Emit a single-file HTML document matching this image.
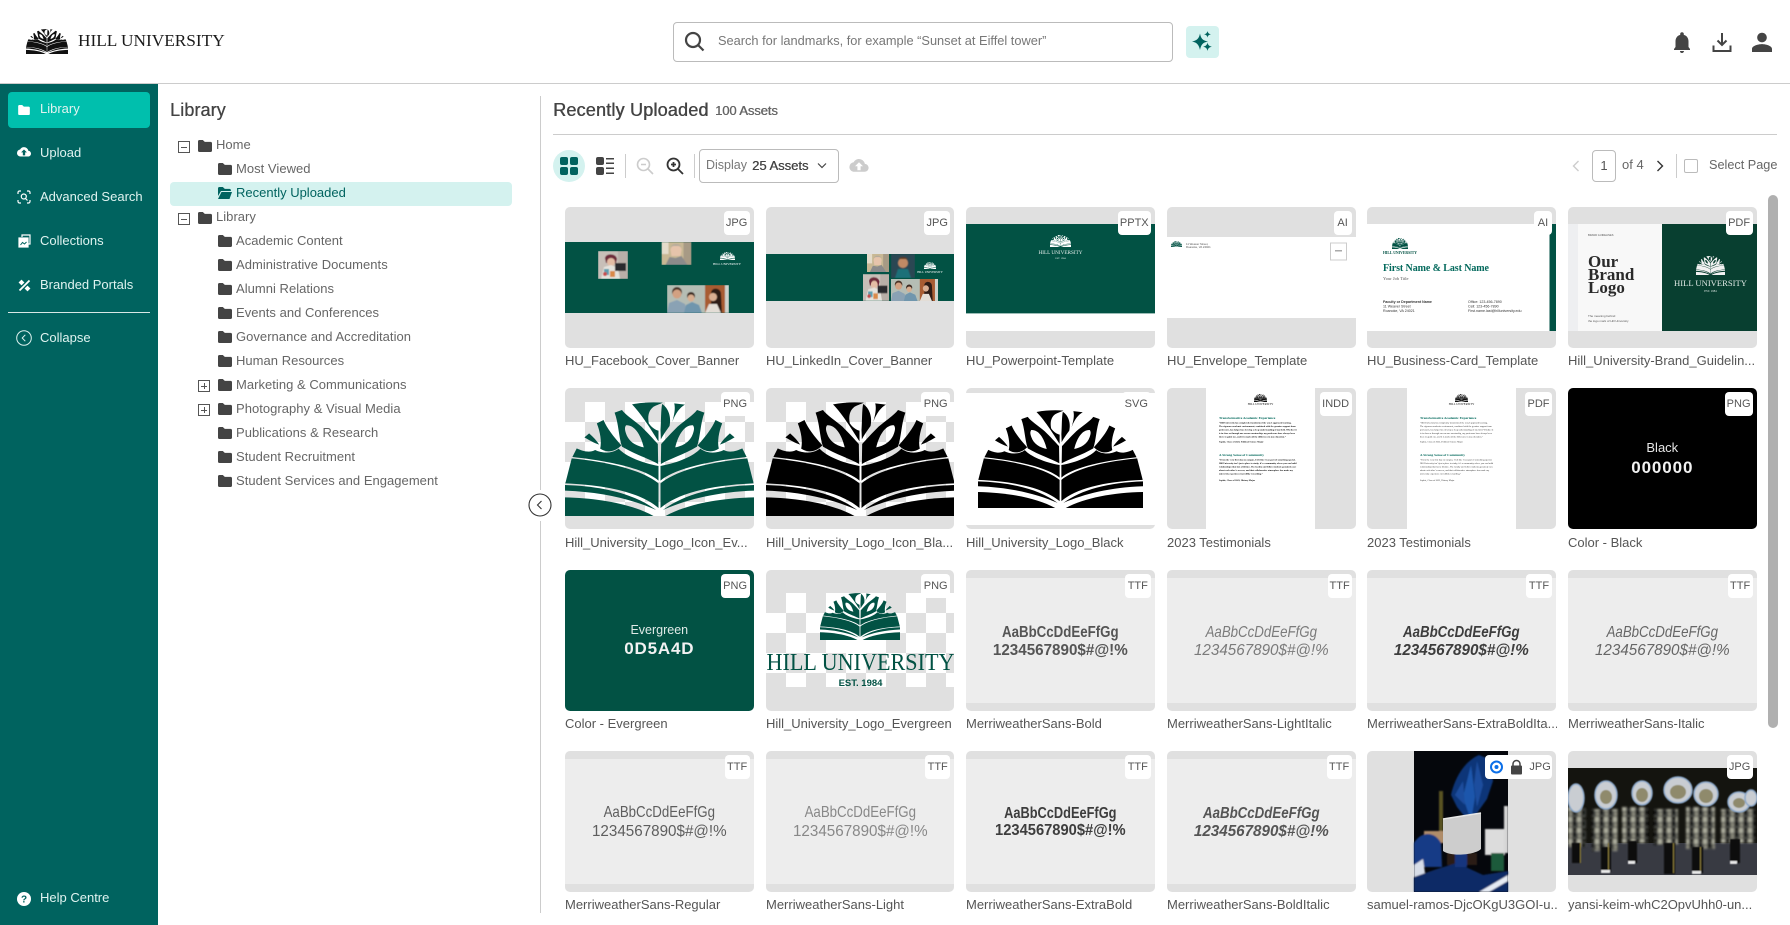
<!DOCTYPE html>
<html lang="en">
<head>
<meta charset="utf-8">
<title>Hill University - Library</title>
<style>
*{box-sizing:border-box}
html,body{margin:0;padding:0}
body{width:1790px;height:925px;overflow:hidden;background:#fff;position:relative;font-family:"Liberation Sans",sans-serif;color:#555}
.a{position:absolute}
.t{position:absolute;white-space:nowrap;line-height:16px;font-size:13px}
.s{color:#dff3f0}
.r{color:#666;letter-spacing:.03px}
.m{text-shadow:.3px 0 0 currentColor}
.c{position:absolute;width:188.6px;height:141px;background:#e0e0e0;border-radius:5px;overflow:hidden}
.c>svg.f{position:absolute;left:0;top:0;width:189px;height:141px}
.b{position:absolute;right:4px;top:4px;height:24px;line-height:24px;background:#fff;border-radius:4px;text-align:center;font-size:11px;font-weight:400;color:#555}
.l{position:absolute;width:190px;white-space:nowrap;overflow:hidden;line-height:16px;font-size:13px;color:#555}
.ttf{position:absolute;left:0;top:8px;width:100%;height:125px;background:#ededed}
.x{position:absolute;left:0;width:100%;text-align:center;white-space:nowrap;color:#5a5a5a}
.x1{font-size:16px;line-height:18px;transform:scaleX(.83)}
.x2{font-size:16px;line-height:18px;transform:scaleX(.95)}
.box{position:absolute;width:12px;height:12px;border:1px solid #555}
.box:before{content:"";position:absolute;left:2px;right:2px;top:4.5px;height:1px;background:#555}
.p:after{content:"";position:absolute;top:2px;bottom:2px;left:4.5px;width:1px;background:#555}
svg{display:block}
</style>
</head>
<body>
<svg width="0" height="0" style="position:absolute">
<defs>
<filter id="bl" x="-5%" y="-5%" width="110%" height="110%"><feGaussianBlur stdDeviation=".7"/></filter>
<filter id="bs" x="-5%" y="-5%" width="110%" height="110%"><feGaussianBlur stdDeviation=".45"/></filter>
<filter id="bm" x="-5%" y="-5%" width="110%" height="110%"><feGaussianBlur stdDeviation="1.100"/></filter>
<symbol id="folder" viewBox="0 0 14 12"><path fill="currentColor" d="M0 1.400C0 .6.6 0 1.400 0h3.400l2 1.900h5.800c.8 0 1.400.6 1.400 1.400v7.300c0 .8-.6 1.400-1.400 1.400H1.400C.6 12 0 11.400 0 10.600z"/></symbol>
<g id="th">
<path d="M148 38L170 30C182 46 205 60 228 80C248 100 264 118 277 132L278 192C250 176 210 164 170 140C160 110 160 70 148 38ZM182 76C205 74 225 100 235 142C212 138 190 125 182 100C178 88 178 82 182 76Z" fill-rule="evenodd"/>
<path d="M95 70L115 60C125 85 145 110 168 136C150 155 125 160 105 146C110 125 105 95 95 70Z"/>
<path d="M58 112L72 100C85 112 95 122 102 134C85 128 72 120 58 112Z"/>
<path d="M35 145C50 152 72 160 90 150C110 160 140 162 160 146C180 168 225 188 279 198L279 242C245 212 160 186 22 171Z"/>
<path d="M20 175C160 189 240 218 279 250L279 324C230 282 140 256 1 250Z"/>
<path d="M0 255C120 259 210 284 272 330C200 298 110 276 0 272Z"/>
<path d="M0 292C100 294 200 312 264 348L0 348Z"/>
</g>
<symbol id="tree" viewBox="0 6 564 342" preserveAspectRatio="none"><g fill="currentColor">
<use href="#th"/><use href="#th" transform="matrix(-1 0 0 1 564 0)"/>
<path d="M200 13C232 7 262 6 292 8C282 13 268 17 262 22C250 32 246 48 250 70C258 82 270 90 279 92L279 124C262 98 232 46 200 13Z"/>
<path d="M326 10L358 14C344 22 330 38 320 66C326 44 330 26 326 10Z"/>
<path d="M290 12C308 24 318 50 312 78C305 88 296 100 286 118L285 90C287 60 286 30 290 12Z"/>
</g></symbol>
<symbol id="ph1" viewBox="0 0 30 28" preserveAspectRatio="none"><g filter="url(#bs)"><rect width="30" height="28" fill="#c8bfb8"/><rect x="20" width="10" height="28" fill="#b9afa8"/><path d="M7 7C8 2 18 2 19 8L18 12H8Z" fill="#6e2b3a"/><circle cx="13" cy="11" r="4" fill="#e4bda5"/><path d="M3 28L6 16 13 14 20 17 22 28Z" fill="#e5e3dd"/><rect x="6" y="18" width="5" height="6" fill="#5e9fb0"/><rect x="12" y="20" width="5" height="6" fill="#d98a4a"/><rect x="17" y="12" width="11" height="8" fill="#2b2b2e"/><circle cx="7" cy="23" r="2" fill="#c74e4e"/></g></symbol>
<symbol id="ph2" viewBox="0 0 30 23" preserveAspectRatio="none"><g filter="url(#bs)"><rect width="30" height="23" fill="#c8b894"/><rect x="22" width="8" height="23" fill="#a79a85"/><rect y="0" width="7" height="12" fill="#e4dccb"/><path d="M9 8C9 2 20 2 20 8L19 14H10Z" fill="#e6c4ab"/><path d="M9 5C11 1 18 1 20 5L18 4H11Z" fill="#b5ab9c"/><path d="M4 23L8 15 14 16 20 14 26 23Z" fill="#8b8b8b"/></g></symbol>
<symbol id="ph3" viewBox="0 0 62 28" preserveAspectRatio="none"><g filter="url(#bs)"><rect width="62" height="28" fill="#b5bdb4"/><rect x="38" width="20" height="28" fill="#a85c32"/><rect x="58" width="4" height="28" fill="#cfd2cc"/><circle cx="10" cy="7" r="5" fill="#4a3326"/><circle cx="10" cy="9" r="4.500" fill="#d2a182"/><path d="M0 28L2 18 10 15 18 19 20 28Z" fill="#8aa2b4"/><circle cx="24" cy="11" r="4" fill="#3c2a20"/><circle cx="24" cy="13" r="3.500" fill="#d8ae90"/><path d="M17 28L19 20 25 17 32 20 35 28Z" fill="#6f96ad"/><path d="M44 8C44 2 54 2 54 9L55 28H40L44 18Z" fill="#2e1e18"/><circle cx="46" cy="12" r="4" fill="#d9ae92"/><path d="M38 28L42 19 50 19 54 28Z" fill="#e3ddd6"/></g></symbol>
<symbol id="ph4" viewBox="0 0 24 24" preserveAspectRatio="none"><g filter="url(#bs)"><rect width="24" height="24" fill="#2c4752"/><circle cx="12" cy="9" r="5" fill="#c08a65"/><path d="M7 6C8 2 16 2 17 6L16 5H8Z" fill="#5c3a22"/><path d="M4 24L7 15 17 15 20 24Z" fill="#1d6f78"/></g></symbol>
<pattern id="ck" width="40" height="40" patternUnits="userSpaceOnUse" patternTransform="translate(0 14)"><rect width="40" height="40" fill="#e0e0e0"/><rect x="20" width="20" height="20" fill="#fff"/><rect y="20" width="20" height="20" fill="#fff"/></pattern>
<pattern id="ck2" width="40" height="40" patternUnits="userSpaceOnUse" patternTransform="translate(0 23)"><rect width="40" height="40" fill="#e0e0e0"/><rect x="20" width="20" height="20" fill="#fff"/><rect y="20" width="20" height="20" fill="#fff"/></pattern>
<pattern id="mot" width="9" height="11" patternUnits="userSpaceOnUse"><rect width="9" height="11" fill="#4a4b46"/><rect x="0" y="0" width="4" height="5" fill="#aeae9e"/><rect x="5" y="4" width="3" height="5" fill="#101010"/><rect x="1" y="6" width="3" height="4" fill="#8d8c7e"/><rect x="5" y="0" width="4" height="3" fill="#1c1c18"/></pattern>
</defs>
</svg>

<!-- header -->
<svg class="a" style="left:26px;top:29px;color:#111" width="42" height="25"><use href="#tree" width="42" height="25"/></svg>
<div class="t" style="left:78px;top:31px;line-height:20px;font-family:'Liberation Serif',serif;font-size:17.300px;color:#1a1a1a">HILL UNIVERSITY</div>

<div class="a" style="left:673px;top:22px;width:500px;height:40px;border:1px solid #bbb;border-radius:4px"></div>
<svg class="a" style="left:683px;top:30px" width="22" height="22" viewBox="0 0 22 22" fill="none" stroke="#444" stroke-width="2.200"><circle cx="10" cy="10" r="7"/><path d="M15 15l5.500 5.500"/></svg>
<div class="t" style="left:718px;top:33px;font-size:12.800px;color:#777">Search for landmarks, for example “Sunset at Eiffel tower”</div>

<div class="a" style="left:1186px;top:26px;width:33px;height:32px;background:#d4f2ef;border-radius:4px"></div>
<svg class="a" style="left:1190px;top:30px" width="26" height="24" viewBox="0 0 26 24" fill="#00635f"><path d="M10 3.500C11 8.500 12.500 10.500 18 11.500C12.500 12.500 11 15 10 20C9 15 7 12.500 2 11.500C7 10.500 9 8.500 10 3.500Z"/><path d="M17.500 1C18 3 18.700 3.800 21 4.300C18.700 4.800 18 5.600 17.500 7.600C17 5.600 16.300 4.800 14 4.300C16.300 3.800 17 3 17.500 1Z"/><path d="M17.500 12.500C18 15 19 16 21.800 16.700C19 17.300 18 18.300 17.500 21C17 18.300 16 17.300 13.200 16.700C16 16 17 15 17.500 12.500Z"/></svg>

<svg class="a" style="left:1670px;top:30px" width="24" height="24" viewBox="0 0 24 24" fill="#444"><path d="M12 23c1.100 0 2-.9 2-2h-4a2 2 0 0 0 2 2zm6.500-6v-5.500c0-3.300-1.700-5.900-4.700-6.600V4a1.800 1.800 0 0 0-3.600 0v.9c-3 .7-4.700 3.300-4.700 6.600V17L4 19v1h16v-1z"/></svg>
<svg class="a" style="left:1711px;top:31px" width="22" height="22" viewBox="0 0 22 22" fill="none" stroke="#444" stroke-width="2"><path d="M11 2v11.500M6.500 9.500L11 14l4.500-4.500M2.500 14.500V20h17v-5.500"/></svg>
<svg class="a" style="left:1750px;top:30px" width="24" height="24" viewBox="0 0 24 24" fill="#444"><path d="M12 12.300c2.700 0 4.800-2.100 4.800-4.800S14.700 2.700 12 2.700 7.200 4.800 7.200 7.500s2.100 4.800 4.800 4.800zm0 1.800c-3.300 0-10 1.500-10 4.800V22h20v-3.100c0-3.300-6.700-4.800-10-4.800z"/></svg>

<div class="a" style="left:0;top:83px;width:1790px;height:1px;background:#ccc"></div>

<!-- sidebar -->
<div class="a" style="left:0;top:84px;width:158px;height:841px;background:#00635f"></div>
<div class="a" style="left:8px;top:92px;width:142px;height:36px;background:#00bfad;border-radius:4px"></div>
<svg class="a" style="left:18px;top:105px;color:#fff" width="12" height="10"><use href="#folder" width="12" height="10"/></svg>
<div class="t s" style="left:40px;top:101px">Library</div>
<svg class="a" style="left:17px;top:147px" width="14" height="12" viewBox="0 0 24 20" fill="#fff"><path d="M19.350 6.040A7.490 7.490 0 0 0 12 0C9.110 0 6.600 1.640 5.350 4.040A5.990 5.990 0 0 0 0 10c0 3.310 2.690 6 6 6h13c2.760 0 5-2.240 5-5 0-2.640-2.050-4.780-4.650-4.960zM14 9v5h-4V9H7l5-5 5 5z"/></svg>
<div class="t s" style="left:40px;top:145px">Upload</div>
<svg class="a" style="left:17px;top:190px" width="14" height="14" viewBox="0 0 14 14" fill="none" stroke="#fff" stroke-width="1.200"><path d="M1 4V2.500A1.500 1.500 0 0 1 2.500 1H4M10 1h1.500A1.500 1.500 0 0 1 13 2.500V4M13 10v1.500a1.500 1.500 0 0 1-1.500 1.500H10M4 13H2.500A1.500 1.500 0 0 1 1 11.500V10"/><circle cx="6.800" cy="6.500" r="2.500"/><path d="M8.500 8.500l2 2"/></svg>
<div class="t s" style="left:40px;top:189px">Advanced Search</div>
<svg class="a" style="left:18px;top:234px" width="13" height="14" viewBox="0 0 13 14" fill="none" stroke="#fff" stroke-width="1.200"><path d="M4 3V1h8v9h-2"/><rect x="1" y="4" width="9" height="9" fill="#fff"/><path d="M2.500 11l2-2.500 2 1.500 2-2" stroke="#00635f" stroke-width="1"/></svg>
<div class="t s" style="left:40px;top:233px">Collections</div>
<svg class="a" style="left:18px;top:279px" width="13" height="13" viewBox="0 0 13 13" fill="none" stroke="#fff" stroke-width="1.800"><path d="M1.500 11.500L11.500 1.500"/><path d="M1 3.500L3.500 1 6 3.500 3.500 6zM7 9.500l2.500-2.500L12 9.500 9.500 12z" fill="#fff" stroke-width=".6"/></svg>
<div class="t s" style="left:40px;top:277px">Branded Portals</div>
<div class="a" style="left:8px;top:312px;width:142px;height:1px;background:#d9e8e6"></div>
<svg class="a" style="left:16px;top:330px" width="16" height="16" viewBox="0 0 16 16" fill="none" stroke="#dff3f0" stroke-width="1"><circle cx="8" cy="8" r="7.300"/><path d="M9.300 4.800L6.200 8l3.100 3.200"/></svg>
<div class="t s" style="left:40px;top:330px">Collapse</div>
<svg class="a" style="left:17px;top:892px" width="14" height="14" viewBox="0 0 14 14"><circle cx="7" cy="7" r="7" fill="#fff"/><text x="7" y="10.500" font-family="Liberation Sans" font-weight="700" font-size="10" text-anchor="middle" fill="#00635f">?</text></svg>
<div class="t s" style="left:40px;top:890px">Help Centre</div>

<!-- tree -->
<div class="t m" style="left:170px;top:100px;font-size:18px;line-height:20px;color:#444;letter-spacing:.1px">Library</div>
<div class="a" style="left:170px;top:182px;width:342px;height:24px;background:#d4f2ef;border-radius:4px"></div>

<div class="box" style="left:178px;top:141px"></div>
<svg class="a" style="left:198px;top:140px;color:#444" width="14" height="12"><use href="#folder" width="14" height="12"/></svg>
<div class="t r" style="left:216px;top:137px">Home</div>
<svg class="a" style="left:218px;top:163px;color:#444" width="14" height="12"><use href="#folder" width="14" height="12"/></svg>
<div class="t r" style="left:236px;top:161px">Most Viewed</div>
<svg class="a" style="left:218px;top:187px" width="14" height="12" viewBox="0 0 14 12" fill="#00635f"><path d="M0 1.400C0 .6.6 0 1.400 0h3.400l2 1.900h4.700c.8 0 1.400.6 1.400 1.400v.7H3L0 9z"/><path d="M3.500 5H14l-2.500 7H0z"/></svg>
<div class="t" style="left:236px;top:185px;color:#00635f">Recently Uploaded</div>
<div class="box" style="left:178px;top:213px"></div>
<svg class="a" style="left:198px;top:212px;color:#444" width="14" height="12"><use href="#folder" width="14" height="12"/></svg>
<div class="t r" style="left:216px;top:209px">Library</div>
<svg class="a" style="left:218px;top:235px;color:#444" width="14" height="12"><use href="#folder" width="14" height="12"/></svg>
<div class="t r" style="left:236px;top:233px">Academic Content</div>
<svg class="a" style="left:218px;top:259px;color:#444" width="14" height="12"><use href="#folder" width="14" height="12"/></svg>
<div class="t r" style="left:236px;top:257px">Administrative Documents</div>
<svg class="a" style="left:218px;top:283px;color:#444" width="14" height="12"><use href="#folder" width="14" height="12"/></svg>
<div class="t r" style="left:236px;top:281px">Alumni Relations</div>
<svg class="a" style="left:218px;top:307px;color:#444" width="14" height="12"><use href="#folder" width="14" height="12"/></svg>
<div class="t r" style="left:236px;top:305px">Events and Conferences</div>
<svg class="a" style="left:218px;top:331px;color:#444" width="14" height="12"><use href="#folder" width="14" height="12"/></svg>
<div class="t r" style="left:236px;top:329px">Governance and Accreditation</div>
<svg class="a" style="left:218px;top:355px;color:#444" width="14" height="12"><use href="#folder" width="14" height="12"/></svg>
<div class="t r" style="left:236px;top:353px">Human Resources</div>
<div class="box p" style="left:198px;top:380px"></div>
<svg class="a" style="left:218px;top:379px;color:#444" width="14" height="12"><use href="#folder" width="14" height="12"/></svg>
<div class="t r" style="left:236px;top:377px">Marketing &amp; Communications</div>
<div class="box p" style="left:198px;top:404px"></div>
<svg class="a" style="left:218px;top:403px;color:#444" width="14" height="12"><use href="#folder" width="14" height="12"/></svg>
<div class="t r" style="left:236px;top:401px">Photography &amp; Visual Media</div>
<svg class="a" style="left:218px;top:427px;color:#444" width="14" height="12"><use href="#folder" width="14" height="12"/></svg>
<div class="t r" style="left:236px;top:425px">Publications &amp; Research</div>
<svg class="a" style="left:218px;top:451px;color:#444" width="14" height="12"><use href="#folder" width="14" height="12"/></svg>
<div class="t r" style="left:236px;top:449px">Student Recruitment</div>
<svg class="a" style="left:218px;top:475px;color:#444" width="14" height="12"><use href="#folder" width="14" height="12"/></svg>
<div class="t r" style="left:236px;top:473px">Student Services and Engagement</div>

<div class="a" style="left:540px;top:96px;width:1px;height:394px;background:#ccc"></div>
<div class="a" style="left:540px;top:521px;width:1px;height:392px;background:#ccc"></div>
<svg class="a" style="left:528px;top:493px" width="24" height="24" viewBox="0 0 24 24" fill="#fff" stroke="#333" stroke-width="1.100"><circle cx="12" cy="12" r="11"/><path d="M13.500 8L9.500 12l4 4" fill="none"/></svg>

<!-- main head -->
<div class="t" style="left:553px;top:100px;font-size:18px;line-height:20px;color:#444;letter-spacing:.2px;text-shadow:.45px 0 0 #444">Recently Uploaded</div>
<div class="t" style="left:715px;top:103px;font-size:13px;color:#666;letter-spacing:-.1px;text-shadow:.4px 0 0 #666">100 Assets</div>
<div class="a" style="left:553px;top:134px;width:1224px;height:1px;background:#ccc"></div>

<!-- toolbar -->
<div class="a" style="left:553px;top:150px;width:32px;height:32px;background:#d4f2ef;border-radius:50%"></div>
<svg class="a" style="left:560px;top:157px" width="18" height="18" fill="#00635f"><rect width="8" height="8" rx="2"/><rect x="10" width="8" height="8" rx="2"/><rect y="10" width="8" height="8" rx="2"/><rect x="10" y="10" width="8" height="8" rx="2"/></svg>
<svg class="a" style="left:596px;top:157px" width="18" height="18" fill="#444"><rect width="8" height="8" rx="2"/><rect y="10" width="8" height="8" rx="2"/><rect x="10" y="1" width="8" height="1.500"/><rect x="10" y="5.500" width="8" height="1.500"/><rect x="10" y="10.500" width="8" height="1.500"/><rect x="10" y="15.500" width="8" height="1.500"/></svg>
<div class="a" style="left:625px;top:154px;width:1px;height:24px;background:#ccc"></div>
<svg class="a" style="left:636px;top:157px" width="18" height="18" viewBox="0 0 18 18" fill="none" stroke="#ccc" stroke-width="1.600"><circle cx="7.500" cy="7.500" r="6"/><path d="M12 12l5 5M5 7.500h5"/></svg>
<svg class="a" style="left:666px;top:157px" width="18" height="18" viewBox="0 0 18 18" fill="none" stroke="#333" stroke-width="1.800"><circle cx="7.500" cy="7.500" r="6"/><path d="M12 12l5 5M5 7.500h5M7.500 5v5"/></svg>
<div class="a" style="left:694px;top:154px;width:1px;height:24px;background:#ccc"></div>
<div class="a" style="left:699px;top:149px;width:140px;height:34px;border:1px solid #bbb;border-radius:4px"></div>
<div class="t" style="left:706px;top:157px;color:#777;font-size:12.500px">Display</div>
<div class="t" style="left:752px;top:158px;color:#444;font-size:13px;text-shadow:.4px 0 0 #444">25 Assets</div>
<svg class="a" style="left:816px;top:162px" width="12" height="8" viewBox="0 0 12 8" fill="none" stroke="#444" stroke-width="1.200"><path d="M2 1.500L6 5.500l4-4"/></svg>
<svg class="a" style="left:849px;top:159px" width="20" height="16" viewBox="0 0 24 20" fill="#ccc"><path d="M19.350 6.040A7.490 7.490 0 0 0 12 0C9.110 0 6.600 1.640 5.350 4.040A5.990 5.990 0 0 0 0 10c0 3.310 2.690 6 6 6h13c2.760 0 5-2.240 5-5 0-2.640-2.050-4.780-4.650-4.960zM14 9v5h-4V9H7l5-5 5 5z"/></svg>

<svg class="a" style="left:1571px;top:160px" width="10" height="12" viewBox="0 0 10 12" fill="none" stroke="#ccc" stroke-width="1.400"><path d="M7.500 1L2.500 6l5 5"/></svg>
<div class="a" style="left:1592px;top:150px;width:24px;height:32px;border:1px solid #bbb;border-radius:4px"></div>
<div class="t" style="left:1592px;top:158px;width:24px;text-align:center;color:#555">1</div>
<div class="t" style="left:1622px;top:157px;color:#666">of 4</div>
<svg class="a" style="left:1655px;top:160px" width="10" height="12" viewBox="0 0 10 12" fill="none" stroke="#333" stroke-width="1.400"><path d="M2.500 1l5 5-5 5"/></svg>
<div class="a" style="left:1676px;top:154px;width:1px;height:24px;background:#ccc"></div>
<div class="a" style="left:1684px;top:159px;width:14px;height:14px;border:1px solid #bbb;border-radius:2px"></div>
<div class="t" style="left:1709px;top:157px;color:#666;font-size:12.700px">Select Page</div>

<div class="a" style="left:1768px;top:195px;width:10px;height:533px;background:#b0b0b0;border-radius:5px"></div>

<!-- ROW 1 -->
<div class="c" style="left:565px;top:207px">
<svg class="f" viewBox="0 0 189 141">
<rect y="35" width="189" height="71" fill="#025244"/>
<use href="#ph1" x="33" y="44" width="30" height="28"/>
<use href="#ph2" x="96.500" y="35" width="30" height="23"/>
<use href="#ph3" x="102" y="78" width="62" height="28"/>
<use href="#tree" x="155" y="45" width="15" height="8" style="color:#fff"/>
<text x="162" y="58" font-family="Liberation Serif" font-size="3.300" fill="#fff" text-anchor="middle">HILL UNIVERSITY</text>
</svg><div class="b" style="width:26px">JPG</div></div>
<div class="l" style="left:565px;top:353px">HU_Facebook_Cover_Banner</div>

<div class="c" style="left:765.600px;top:207px">
<svg class="f" viewBox="0 0 189 141">
<rect y="47" width="189" height="47" fill="#025244"/>
<use href="#ph2" x="101" y="47" width="22" height="18"/>
<use href="#ph4" x="125" y="47" width="24" height="24"/>
<use href="#ph1" x="97" y="67" width="26" height="27"/>
<use href="#ph3" x="125" y="72" width="47" height="22"/>
<use href="#tree" x="158" y="55" width="12" height="7" style="color:#fff"/>
<text x="164" y="66" font-family="Liberation Serif" font-size="3" fill="#fff" text-anchor="middle">HILL UNIVERSITY</text>
</svg><div class="b" style="width:26px">JPG</div></div>
<div class="l" style="left:766px;top:353px">HU_LinkedIn_Cover_Banner</div>

<div class="c" style="left:966.200px;top:207px">
<svg class="f" viewBox="0 0 189 141">
<rect y="17" width="189" height="89" fill="#025244"/><rect y="106" width="189" height="1" fill="#9bbdb6"/><rect y="107" width="189" height="17" fill="#fff"/>
<use href="#tree" x="84" y="28" width="21" height="12" style="color:#fff"/>
<text x="94.500" y="47" font-family="Liberation Serif" font-size="5.200" fill="#e8f0ee" text-anchor="middle">HILL UNIVERSITY</text>
<text x="94.500" y="52" font-family="Liberation Serif" font-size="2.500" fill="#e8f0ee" text-anchor="middle">EST. 1984</text>
</svg><div class="b" style="width:33px">PPTX</div></div>
<div class="l" style="left:966px;top:353px">HU_Powerpoint-Template</div>

<div class="c" style="left:1167px;top:207px">
<svg class="f" viewBox="0 0 189 141">
<rect y="30" width="189" height="81" fill="#fff"/>
<use href="#tree" x="4" y="34" width="11" height="6" style="color:#025244"/>
<text x="19" y="38" font-family="Liberation Sans" font-size="2.800" fill="#555">11 Weaver Street,</text>
<text x="19" y="41" font-family="Liberation Sans" font-size="2.800" fill="#555">Roanoke, VA 24021</text>
<rect x="163.500" y="36" width="16" height="17" fill="#fff" stroke="#ccc"/><rect x="168" y="43" width="7" height="1.500" fill="#aaa"/>
</svg><div class="b" style="width:18px">AI</div></div>
<div class="l" style="left:1167px;top:353px">HU_Envelope_Template</div>

<div class="c" style="left:1367.400px;top:207px">
<svg class="f" viewBox="0 0 189 141">
<rect y="17" width="189" height="107" fill="#fff"/><rect x="182.500" y="17" width="6.500" height="107" fill="#025244"/>
<use href="#tree" x="25" y="31" width="16" height="11" style="color:#025244"/>
<text x="33" y="47" font-family="Liberation Serif" font-weight="700" font-size="3.800" fill="#025244" text-anchor="middle">HILL UNIVERSITY</text>
<text x="16" y="64" font-family="Liberation Serif" font-weight="700" font-size="10" fill="#03695c" textLength="106">First Name &amp; Last Name</text>
<text x="16" y="73" font-family="Liberation Serif" font-size="4.500" fill="#555">Your Job Title</text>
<text x="16" y="96" font-family="Liberation Sans" font-weight="700" font-size="3.600" fill="#333">Faculty or Department Name</text>
<text x="16" y="100.500" font-family="Liberation Sans" font-size="3.600" fill="#333">11 Weaver Street</text>
<text x="16" y="105" font-family="Liberation Sans" font-size="3.600" fill="#333">Roanoke, VA 24021</text>
<text x="101" y="96" font-family="Liberation Sans" font-size="3.600" fill="#333">Office: 123-456-7890</text>
<text x="101" y="100.500" font-family="Liberation Sans" font-size="3.600" fill="#333">Cell: 123-456-7890</text>
<text x="101" y="105" font-family="Liberation Sans" font-size="3.600" fill="#333">First.name.last@hilluniversity.edu</text>
</svg><div class="b" style="width:18px">AI</div></div>
<div class="l" style="left:1367px;top:353px">HU_Business-Card_Template</div>

<div class="c" style="left:1568px;top:207px">
<svg class="f" viewBox="0 0 189 141">
<rect y="17" width="10" height="107" fill="#eeeff1"/><rect x="10" y="17" width="84" height="107" fill="#f8f8f8"/><rect x="94" y="17" width="95" height="107" fill="#083f30"/>
<text x="20" y="29" font-family="Liberation Sans" font-size="2.600" fill="#555">BRAND GUIDELINES</text>
<g font-family="Liberation Serif" font-weight="700" font-size="17" fill="#2a2a2a"><text x="20" y="60">Our</text><text x="20" y="73">Brand</text><text x="20" y="86">Logo</text></g>
<text x="20" y="110" font-family="Liberation Sans" font-size="3" fill="#555">The meaning behind</text><text x="20" y="115" font-family="Liberation Sans" font-size="3" fill="#555">the logo mark of Hill University</text>
<use href="#tree" x="128" y="49" width="29" height="19" style="color:#f2f2f2"/>
<text x="142.500" y="79" font-family="Liberation Serif" font-size="8.600" fill="#dfe8e4" text-anchor="middle">HILL UNIVERSITY</text>
<text x="142.500" y="85" font-family="Liberation Serif" font-size="3" fill="#dfe8e4" text-anchor="middle">EST. 1984</text>
</svg><div class="b" style="width:27px">PDF</div></div>
<div class="l" style="left:1568px;top:353px">Hill_University-Brand_Guidelin...</div>

<!-- ROW 2 -->
<div class="c" style="left:565px;top:388.300px">
<svg class="f" viewBox="0 0 189 141"><rect y="14" width="189" height="114" fill="url(#ck)"/><use href="#tree" x="0" y="14" width="189" height="114" style="color:#025244"/></svg>
<div class="b" style="width:29px">PNG</div></div>
<div class="l" style="left:565px;top:534.500px">Hill_University_Logo_Icon_Ev...</div>

<div class="c" style="left:765.600px;top:388.300px">
<svg class="f" viewBox="0 0 189 141"><rect y="14" width="189" height="114" fill="url(#ck)"/><use href="#tree" x="0" y="14" width="189" height="114" style="color:#000"/></svg>
<div class="b" style="width:29px">PNG</div></div>
<div class="l" style="left:766px;top:534.500px">Hill_University_Logo_Icon_Bla...</div>

<div class="c" style="left:966.200px;top:388.300px">
<svg class="f" viewBox="0 0 189 141"><rect y="5" width="189" height="132" fill="#fff"/><use href="#tree" x="12" y="22" width="165" height="98" style="color:#000"/></svg>
<div class="b" style="width:29px">SVG</div></div>
<div class="l" style="left:966px;top:534.500px">Hill_University_Logo_Black</div>

<div class="c" style="left:1167px;top:388.300px">
<svg class="f" viewBox="0 0 189 141">
<rect x="39" width="109" height="141" fill="#fff"/>
<use href="#tree" x="87" y="6" width="13" height="8" style="color:#111"/>
<text x="93.500" y="17" font-family="Liberation Serif" font-size="3" fill="#111" text-anchor="middle">HILL UNIVERSITY</text>
<g font-family="Liberation Serif">
<text x="52" y="31" font-size="3.500" font-weight="700" fill="#03695c">Transformative Academic Experience</text>
<g font-size="2.300" font-weight="700" fill="#111">
<text x="52" y="35.500">“Hill University has completely transformed the way I approach learning.</text>
<text x="52" y="39">The rigorous academic environment, combined with the genuine support from</text>
<text x="52" y="42.500">professors, has helped me develop a deep understanding of my field. Whether it</text>
<text x="52" y="46">is in class or through one-on-one mentorship, my professors have always been</text>
<text x="52" y="49.500">there to guide me, and it is made all the difference in my education.”</text>
<text x="52" y="54.500">Sophie, Class of 2023, Political Science Major</text></g>
<text x="52" y="68" font-size="3.500" font-weight="700" fill="#03695c">A Strong Sense of Community</text>
<g font-size="2.300" font-weight="700" fill="#111">
<text x="52" y="72.500">“From the very first day on campus, I felt like I was part of something special.</text>
<text x="52" y="76">Hill University isn’t just a place to study; it’s a community where you can build</text>
<text x="52" y="79.500">relationships that last a lifetime. The faculty and fellow students genuinely care</text>
<text x="52" y="83">about each other’s success, and that collaborative atmosphere has made my</text>
<text x="52" y="86.500">university experience incredibly rewarding.”</text>
<text x="52" y="93">Sophie, Class of 2023, History Major</text></g>
</g></svg>
<div class="b" style="width:32px">INDD</div></div>
<div class="l" style="left:1167px;top:534.500px">2023 Testimonials</div>

<div class="c" style="left:1367.400px;top:388.300px">
<svg class="f" viewBox="0 0 189 141">
<rect x="40" width="109" height="141" fill="#fff"/>
<use href="#tree" x="88" y="6" width="13" height="8" style="color:#111"/>
<text x="94.500" y="17" font-family="Liberation Serif" font-size="3" fill="#111" text-anchor="middle">HILL UNIVERSITY</text>
<g font-family="Liberation Serif">
<text x="53" y="31" font-size="3.500" font-weight="700" fill="#03695c">Transformative Academic Experience</text>
<g font-size="2.300" fill="#333">
<text x="53" y="35.500">“Hill University has completely transformed the way I approach learning.</text>
<text x="53" y="39">The rigorous academic environment, combined with the genuine support from</text>
<text x="53" y="42.500">professors, has helped me develop a deep understanding of my field. Whether it</text>
<text x="53" y="46">is in class or through one-on-one mentorship, my professors have always been</text>
<text x="53" y="49.500">there to guide me, and it is made all the difference in my education.”</text>
<text x="53" y="54.500">Sophie, Class of 2023, Political Science Major</text></g>
<text x="53" y="68" font-size="3.500" font-weight="700" fill="#03695c">A Strong Sense of Community</text>
<g font-size="2.300" fill="#333">
<text x="53" y="72.500">“From the very first day on campus, I felt like I was part of something special.</text>
<text x="53" y="76">Hill University isn’t just a place to study; it’s a community where you can build</text>
<text x="53" y="79.500">relationships that last a lifetime. The faculty and fellow students genuinely care</text>
<text x="53" y="83">about each other’s success, and that collaborative atmosphere has made my</text>
<text x="53" y="86.500">university experience incredibly rewarding.”</text>
<text x="53" y="93">Sophie, Class of 2023, History Major</text></g>
</g></svg>
<div class="b" style="width:27px">PDF</div></div>
<div class="l" style="left:1367px;top:534.500px">2023 Testimonials</div>

<div class="c" style="left:1568px;top:388.300px;background:#000">
<div class="x" style="top:52px;font-size:13px;line-height:16px;color:#e6e6e6">Black</div>
<div class="x" style="top:70px;font-size:17px;line-height:20px;font-weight:700;letter-spacing:.9px;color:#f2f2f2">000000</div>
<div class="b" style="width:28px">PNG</div></div>
<div class="l" style="left:1568px;top:534.500px">Color - Black</div>

<!-- ROW 3 -->
<div class="c" style="left:565px;top:569.600px;background:#025244">
<div class="x" style="top:52px;font-size:12.500px;line-height:16px;color:#dfeae7">Evergreen</div>
<div class="x" style="top:69px;font-size:17px;line-height:20px;font-weight:700;letter-spacing:.8px;color:#f2f2f2">0D5A4D</div>
<div class="b" style="width:29px">PNG</div></div>
<div class="l" style="left:565px;top:715.700px">Color - Evergreen</div>

<div class="c" style="left:765.600px;top:569.600px">
<svg class="f" viewBox="0 0 189 141"><rect y="23" width="189" height="94" fill="url(#ck2)"/>
<rect x="60" y="23" width="60" height="60" fill="#fff"/>
<use href="#tree" x="54" y="23" width="80" height="47" style="color:#025244"/>
<text x="94.500" y="100" font-family="Liberation Serif" font-size="24.500" fill="#025244" text-anchor="middle" textLength="188" lengthAdjust="spacingAndGlyphs">HILL UNIVERSITY</text>
<text x="94.500" y="116" font-family="Liberation Sans" font-size="9.500" font-weight="700" fill="#025244" text-anchor="middle">EST. 1984</text></svg>
<div class="b" style="width:29px">PNG</div></div>
<div class="l" style="left:766px;top:715.700px">Hill_University_Logo_Evergreen</div>

<div class="c" style="left:966.200px;top:569.600px"><div class="ttf"></div>
<div class="x x1" style="top:54px;font-weight:700;color:#555">AaBbCcDdEeFfGg</div>
<div class="x x2" style="top:72px;font-weight:700;color:#555">1234567890$#@!%</div>
<div class="b" style="width:26px">TTF</div></div>
<div class="l" style="left:966px;top:715.700px">MerriweatherSans-Bold</div>

<div class="c" style="left:1167px;top:569.600px"><div class="ttf"></div>
<div class="x x1" style="top:54px;font-style:italic;color:#7b7b7b">AaBbCcDdEeFfGg</div>
<div class="x x2" style="top:72px;font-style:italic;color:#7b7b7b">1234567890$#@!%</div>
<div class="b" style="width:24px">TTF</div></div>
<div class="l" style="left:1167px;top:715.700px">MerriweatherSans-LightItalic</div>

<div class="c" style="left:1367.400px;top:569.600px"><div class="ttf"></div>
<div class="x x1" style="top:54px;font-style:italic;font-weight:700;color:#3d3d3d">AaBbCcDdEeFfGg</div>
<div class="x x2" style="top:72px;font-style:italic;font-weight:700;color:#3d3d3d">1234567890$#@!%</div>
<div class="b" style="width:26px">TTF</div></div>
<div class="l" style="left:1367px;top:715.700px">MerriweatherSans-ExtraBoldIta...</div>

<div class="c" style="left:1568px;top:569.600px"><div class="ttf"></div>
<div class="x x1" style="top:54px;font-style:italic;color:#666">AaBbCcDdEeFfGg</div>
<div class="x x2" style="top:72px;font-style:italic;color:#666">1234567890$#@!%</div>
<div class="b" style="width:25px">TTF</div></div>
<div class="l" style="left:1568px;top:715.700px">MerriweatherSans-Italic</div>

<!-- ROW 4 -->
<div class="c" style="left:565px;top:751px"><div class="ttf"></div>
<div class="x x1" style="top:53px;color:#5e5e5e">AaBbCcDdEeFfGg</div>
<div class="x x2" style="top:72px;color:#5e5e5e">1234567890$#@!%</div>
<div class="b" style="width:25px">TTF</div></div>
<div class="l" style="left:565px;top:897px">MerriweatherSans-Regular</div>

<div class="c" style="left:765.600px;top:751px"><div class="ttf"></div>
<div class="x x1" style="top:53px;color:#888">AaBbCcDdEeFfGg</div>
<div class="x x2" style="top:72px;color:#888">1234567890$#@!%</div>
<div class="b" style="width:25px">TTF</div></div>
<div class="l" style="left:766px;top:897px">MerriweatherSans-Light</div>

<div class="c" style="left:966.200px;top:751px"><div class="ttf"></div>
<div class="x x1" style="top:54px;font-weight:700;color:#3d3d3d;transform:scaleX(.8)">AaBbCcDdEeFfGg</div>
<div class="x x2" style="top:71px;font-weight:700;color:#3d3d3d;transform:scaleX(.92)">1234567890$#@!%</div>
<div class="b" style="width:26px">TTF</div></div>
<div class="l" style="left:966px;top:897px">MerriweatherSans-ExtraBold</div>

<div class="c" style="left:1167px;top:751px"><div class="ttf"></div>
<div class="x x1" style="top:54px;font-style:italic;font-weight:700;color:#555">AaBbCcDdEeFfGg</div>
<div class="x x2" style="top:72px;font-style:italic;font-weight:700;color:#555">1234567890$#@!%</div>
<div class="b" style="width:25px">TTF</div></div>
<div class="l" style="left:1167px;top:897px">MerriweatherSans-BoldItalic</div>

<div class="c" style="left:1367.400px;top:751px">
<svg class="f" viewBox="0 0 189 141">
<rect x="47" width="94" height="141" fill="#05070c"/>
<g filter="url(#bl)">
<rect x="72" y="40" width="4" height="40" fill="#5a5224"/>
<path d="M84 44C88 26 98 10 112 4L122 8 126 30 120 48 110 62 104 74 98 66 90 56Z" fill="#0d3478"/>
<path d="M96 46L104 14 108 46 104 70Z" fill="#1a56ac"/>
<path d="M110 10L116 34 110 56 107 34Z" fill="#1a4e9e"/>
<path d="M88 44L96 30 98 54Z" fill="#1a4e9e"/>
<rect x="57" y="80" width="20" height="12" fill="#b08d6a"/>
<rect x="118" y="78" width="20" height="26" fill="#dcdcdc"/>
<rect x="137" y="55" width="4" height="47" fill="#d6d6d6"/>
<rect x="124" y="102" width="13" height="18" fill="#1f5a3a"/>
<path d="M47 92C54 80 68 80 74 92L75 116H47Z" fill="#123a86"/>
<path d="M47 114L56 108 58 122 47 128Z" fill="#d7dde8"/>
<rect x="80" y="102" width="30" height="12" fill="#2a1e18"/>
<path d="M47 141V126L70 118 90 112 116 124 141 120V141Z" fill="#0c2a66"/>
<rect x="88" y="100" width="12" height="16" fill="#12367e"/>
<path d="M112 141L141 124V130L122 141Z" fill="#e6ebf4"/>
</g>
<path d="M76 68L114 62V98C108 104 84 106 76 100Z" fill="#cdcdcd"/>
<path d="M76 68L114 62" stroke="#e8e8e8" stroke-width="1.500"/>
</svg>
<div class="a" style="right:4px;top:4px;width:67px;height:24px;background:#fff;border-radius:4px"></div>
<svg class="a" style="left:122px;top:8px" width="15" height="16" viewBox="0 0 15 16" fill="none" stroke="#0a6ee8"><circle cx="7.500" cy="8" r="5.500" stroke-width="2"/><circle cx="7.500" cy="8" r="2" fill="#0a6ee8" stroke="none"/></svg>
<svg class="a" style="left:143px;top:8px" width="13" height="16" viewBox="0 0 13 16"><path d="M3 7V5a3.500 3.500 0 0 1 7 0v2" fill="none" stroke="#444" stroke-width="1.500"/><rect x="1" y="6.500" width="11" height="9" rx="1" fill="#444"/></svg>
<div class="a" style="left:162px;top:4px;font-size:11px;line-height:24px;color:#555">JPG</div>
</div>
<div class="l" style="left:1367px;top:897px">samuel-ramos-DjcOKgU3GOI-u...</div>

<div class="c" style="left:1568px;top:751px">
<svg class="f" viewBox="0 0 189 141">
<rect y="17" width="189" height="107" fill="#14140f"/>
<rect y="92" width="189" height="32" fill="#383a42"/>
<g filter="url(#bm)">
<g fill="url(#mot)">
<rect x="0" y="56" width="18" height="40"/><rect x="24" y="58" width="26" height="42"/><rect x="54" y="56" width="26" height="36"/><rect x="86" y="58" width="24" height="36"/><rect x="118" y="56" width="29" height="42"/><rect x="153" y="58" width="34" height="34"/></g>
</g>
<g filter="url(#bs)">
<g fill="#0a0a0a">
<rect x="4" y="92" width="9" height="20"/><rect x="33" y="96" width="10" height="25"/><rect x="60" y="90" width="9" height="22"/><rect x="96" y="92" width="11" height="31"/><rect x="124" y="96" width="11" height="26"/><rect x="162" y="88" width="10" height="24"/></g>
<g fill="#8a7a3a"><rect x="40" y="92" width="1" height="28"/><rect x="105" y="92" width="1" height="30"/><rect x="132" y="96" width="1" height="26"/><rect x="12" y="92" width="1" height="20"/></g>
<g fill="#c9cdd2" stroke="#8aa7c9" stroke-width="1.500">
<ellipse cx="8" cy="47" rx="8" ry="14"/><ellipse cx="38" cy="44" rx="11" ry="14"/><ellipse cx="74" cy="42" rx="10" ry="12"/><ellipse cx="110" cy="39" rx="14" ry="13"/><ellipse cx="138" cy="43" rx="12" ry="12"/><ellipse cx="171" cy="51" rx="11" ry="10"/><ellipse cx="183" cy="47" rx="6" ry="8"/></g>
<g fill="#8f8a6c"><ellipse cx="38" cy="46" rx="6" ry="7"/><ellipse cx="74" cy="44" rx="6" ry="7"/><ellipse cx="110" cy="41" rx="8" ry="7"/><ellipse cx="138" cy="45" rx="7" ry="7"/><ellipse cx="171" cy="52" rx="6" ry="5"/></g>
<g fill="#e8e8e8"><rect x="33" y="119" width="9" height="3"/><rect x="124" y="120" width="9" height="3"/><rect x="60" y="110" width="7" height="3"/><rect x="162" y="110" width="7" height="3"/></g>
</g>
</svg>
<div class="b" style="width:26px">JPG</div></div>
<div class="l" style="left:1568px;top:897px">yansi-keim-whC2OpvUhh0-un...</div>
</body>
</html>
